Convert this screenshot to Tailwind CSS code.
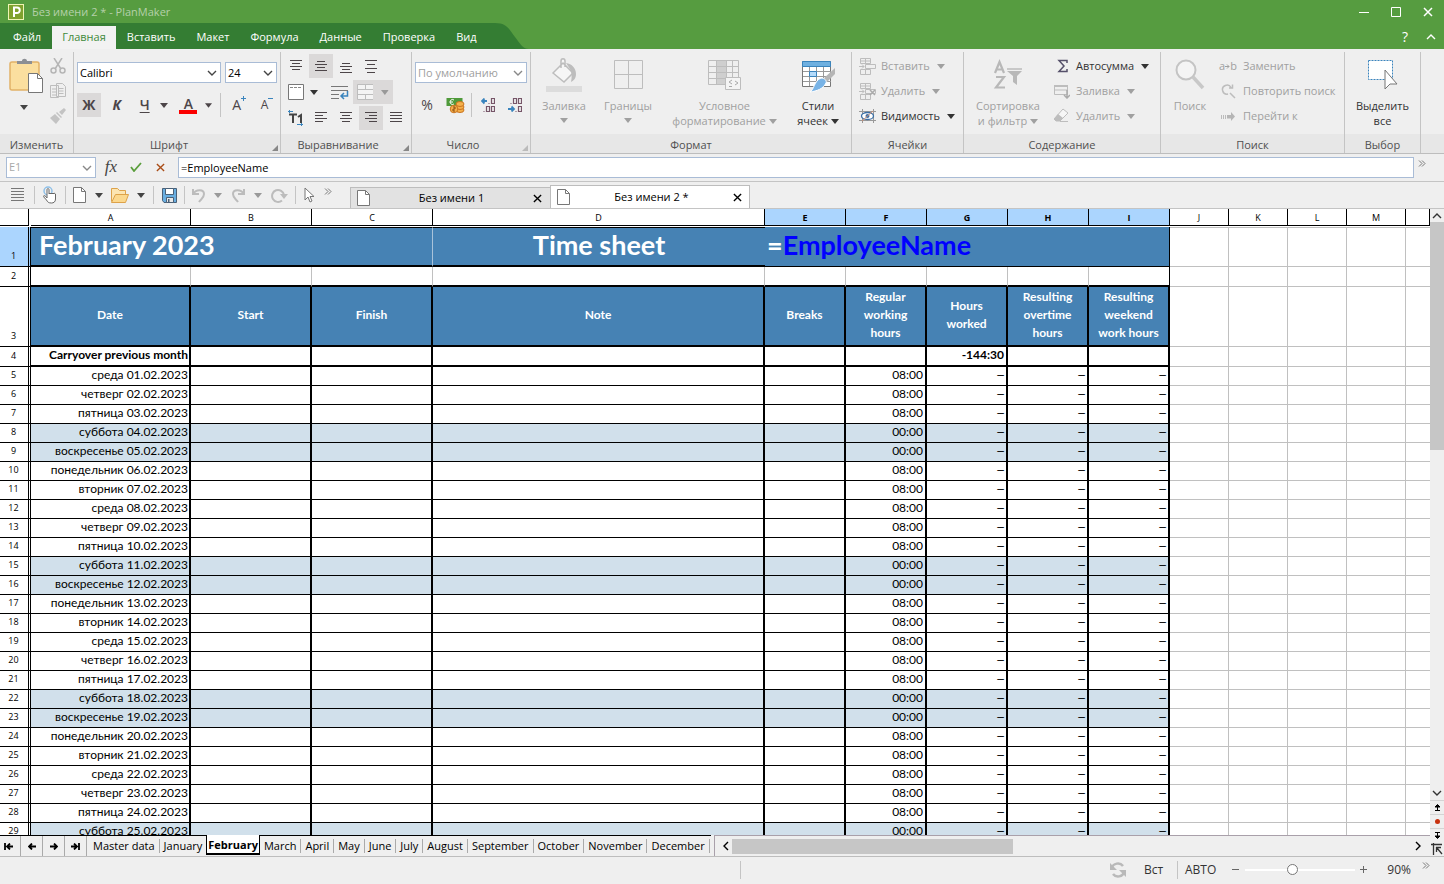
<!DOCTYPE html>
<html lang="ru">

<head>
	<meta charset="UTF-8" />
	<meta name="viewport" content="width=device-width, initial-scale=1.0" />
	<title>Без имени 2 * - PlanMaker</title>
	<script src="https://cdn.jsdelivr.net/npm/@tailwindcss/browser@4"></script>
</head>

<body class="h-screen flex flex-col overflow-hidden bg-[#efefef] font-['Open_Sans','Noto_Sans',sans-serif] text-[11px] leading-4 text-[#333]">

	<!-- shared icons -->
	<svg class="hidden">
		<symbol id="down" viewBox="0 0 8 5"><path d="M0 0h8L4 5z" fill="currentColor" /></symbol>
		<symbol id="chev" viewBox="0 0 10 6"><path d="M1 1l4 4 4-4" fill="none" stroke="currentColor" stroke-width="1.4" /></symbol>
		<symbol id="page" viewBox="0 0 13 16"><path d="M.5.5h8l4 4v11H.5z" fill="#fff" stroke="#777" /><path d="M8.500.5v4h4" fill="none" stroke="#777" /></symbol>
		<symbol id="more" viewBox="0 0 8 7"><path d="M1 .5l3 3-3 3M4 .5l3 3-3 3" fill="none" stroke="#777" /></symbol>
		<symbol id="cross" viewBox="0 0 10 10"><path d="M1 1l8 8M9 1l-8 8" fill="none" stroke="currentColor" stroke-width="1.500" /></symbol>
		<symbol id="corner" viewBox="0 0 6 6"><path d="M6 0v6H0z" fill="currentColor" /></symbol>
		<symbol id="undo" viewBox="0 0 14 15"><path d="M1 1v5h6M1.500 5.500C4 1 12 1 12 6c0 4-3 5-5 8" fill="none" stroke="#bcbcbc" stroke-width="2" /></symbol>
		<symbol id="cells" viewBox="0 0 17 17"><path d="M1.500.5h10v5h-10zM6.500.5v5M1.500 3h10M6.500 6.500h10v4h-10zM1.500 11.500h10v5h-10zM6.500 11.500v5M0 8.500h5M3 6.500l2 2-2 2" fill="none" stroke="#bdbdbd" /></symbol>
	</svg>

	<!-- title bar -->
	<header class="h-[23px] shrink-0 flex items-center bg-[#569c40] text-[#b5d0aa]">
		<svg class="ml-2 mr-2" width="16" height="16"><rect width="16" height="16" fill="#eef4b4" /><rect x="1" y="1" width="14" height="14" fill="#7fa22e" /><path d="M6 13V3.500h3a2.500 2.500 0 010 5.500H6" fill="none" stroke="#fff" stroke-width="2" /></svg>
		<h1>Без имени 2 * - PlanMaker</h1>
		<div class="ml-auto flex text-white">
			<button class="w-8 flex justify-center" aria-label="Свернуть"><svg width="10" height="10"><path d="M0 5.500h10" stroke="currentColor" /></svg></button>
			<button class="w-8 flex justify-center" aria-label="Развернуть"><svg width="10" height="10"><path d="M.5.5h9v9h-9z" fill="none" stroke="currentColor" /></svg></button>
			<button class="w-8 flex justify-center" aria-label="Закрыть"><svg width="10" height="10"><use href="#cross" /></svg></button>
		</div>
	</header>

	<!-- menu tabs -->
	<div class="h-[26px] shrink-0 flex items-end bg-[#569c40] text-white">
		<nav class="h-[26px] flex items-end gap-px bg-[#347d33] pl-[3px]">
			<a href="#" class="h-[23px] leading-[22px] px-[10px]">Файл</a>
			<a href="#" class="h-[23px] leading-[22px] px-[10px] bg-[#f2f2f2] text-[#3f8a3a]">Главная</a>
			<a href="#" class="h-[23px] leading-[22px] px-[10px]">Вставить</a>
			<a href="#" class="h-[23px] leading-[22px] px-[10px]">Макет</a>
			<a href="#" class="h-[23px] leading-[22px] px-[10px]">Формула</a>
			<a href="#" class="h-[23px] leading-[22px] px-[10px]">Данные</a>
			<a href="#" class="h-[23px] leading-[22px] px-[10px]">Проверка</a>
			<a href="#" class="h-[23px] leading-[22px] px-[10px]">Вид</a>
		</nav>
		<svg width="42" height="26"><path d="M0 0h8C20 0 22 6 28 14s8 12 14 12H0z" fill="#347d33" /></svg>
		<div class="ml-auto flex items-center h-6">
			<button class="w-[26px] text-sm" aria-label="Справка">?</button>
			<button class="w-[26px] flex justify-center" aria-label="Свернуть ленту"><svg class="rotate-180" width="10" height="6"><use href="#chev" /></svg></button>
		</div>
	</div>

	<!-- ribbon -->
	<div class="h-[105px] shrink-0 flex pt-[3px] border-b border-[#bdbdbd] bg-[linear-gradient(#efefef_85px,#e7e7e7_85px)]">
		<section class="w-[74px] flex flex-col border-r border-[#c4c4c4]">
			<div class="flex-1 flex">
				<button class="w-12 flex flex-col items-center pt-[6px] gap-3 text-[#444]" aria-label="Вставить">
					<svg class="ml-1" width="34" height="35">
						<rect x="1" y="4" width="29" height="28" rx="2" fill="#fbdf9f" stroke="#e2b268" stroke-width="1.500" />
						<path d="M8 6V3h5c0-3 5-3 5 0h5v3z" fill="#8c8f94" />
						<path d="M19.500 15.500h9l5 5v14h-14z" fill="#fff" stroke="#777" /><path d="M28.500 15.500v5h5" fill="none" stroke="#777" />
					</svg>
					<svg width="8" height="5"><use href="#down" /></svg>
				</button>
				<div class="flex flex-col gap-[9px] pt-[6px] w-5 items-center">
					<button aria-label="Вырезать"><svg width="16" height="16"><g fill="none" stroke="#b5b5b5" stroke-width="1.500"><path d="M4 0l7 11M12 0L5 11" /><circle cx="3.500" cy="12.500" r="2.500" /><circle cx="12.500" cy="12.500" r="2.500" /></g></svg></button>
					<button aria-label="Копировать"><svg width="16" height="16"><g fill="#efefef" stroke="#bdbdbd"><path d="M.5 2.500h8v12h-8zM6.500.5h6l3 3v10h-9z" /><path d="M2 6h4M2 9h4M2 12h4M8.500 5.500h5M8.500 8h5M8.500 10.500h5" /></g></svg></button>
					<button aria-label="Формат по образцу"><svg width="16" height="16"><path d="M14 0l2 2-4 5-3-3zM7 4l5 5-1 1-5-5zM5 6l5 5-4 5L0 10z" fill="#c3c3c3" /></svg></button>
				</div>
			</div>
			<h2 class="h-5 leading-[23px] text-center text-[#505050]">Изменить</h2>
		</section>

		<section class="w-[207px] flex flex-col border-r border-[#c4c4c4]">
			<div class="flex-1 px-[3px] pt-[10px] text-black">
				<div class="flex gap-1">
					<label class="relative w-36">
						<select class="w-full h-[21px] appearance-none border border-[#a9bcd6] bg-white px-[2px]" aria-label="Шрифт"><option>Calibri</option></select>
						<svg class="absolute right-1 top-2 text-[#444]" width="10" height="6"><use href="#chev" /></svg>
					</label>
					<label class="relative w-[52px]">
						<select class="w-full h-[21px] appearance-none border border-[#a9bcd6] bg-white px-[2px]" aria-label="Размер"><option>24</option></select>
						<svg class="absolute right-1 top-2 text-[#444]" width="10" height="6"><use href="#chev" /></svg>
					</label>
				</div>
				<div class="flex items-center mt-[10px] text-sm text-[#4c4548]">
					<button class="w-6 h-6 bg-[#dbd9d9] font-bold">Ж</button>
					<button class="w-8 h-6 font-bold italic">К</button>
					<button class="w-6 h-6 font-semibold underline underline-offset-2">Ч</button>
					<button class="w-[15px] h-6 flex items-center justify-center" aria-label="Вид подчёркивания"><svg width="8" height="5"><use href="#down" /></svg></button>
					<button class="w-[34px] h-6 flex flex-col items-center font-semibold leading-[18px]"><span class="pt-[2px] h-[17px]">A</span><span class="h-1 w-[18px] bg-[#fb0000]"></span></button>
					<button class="w-[7px] h-6 flex items-center justify-center" aria-label="Цвет шрифта"><svg width="8" height="5"><use href="#down" /></svg></button>
					<span class="ml-2 w-px h-6 bg-[#c4c4c4]"></span>
					<button class="w-9 h-6 flex items-center justify-center">A<svg class="self-start mt-[3px]" width="5" height="5"><path d="M2.500 0v5M0 2.500h5" stroke="#3a84bd" /></svg></button>
					<button class="w-5 h-6 flex items-center justify-center text-xs">A<svg class="self-start mt-[3px]" width="5" height="5"><path d="M0 2.500h5" stroke="#3a84bd" /></svg></button>
				</div>
			</div>
			<h2 class="relative h-5 leading-[23px] text-center text-[#505050] pr-4">Шрифт<svg class="absolute right-[2px] bottom-[2px] text-[#888]" width="6" height="6"><use href="#corner" /></svg></h2>
		</section>

		<section class="w-[131px] flex flex-col border-r border-[#c4c4c4]">
			<div class="flex-1 px-[3px] pt-[2px] flex flex-col gap-[2px] text-[#4c4548]">
				<div class="flex gap-px">
					<button class="w-6 h-6 flex justify-center pt-1" aria-label="По верхнему краю"><svg width="12" height="16"><path d="M0 2.500h12M2 5.500h8M0 8.500h12M2 11.500h8" stroke="currentColor" /></svg></button>
					<button class="w-6 h-6 flex justify-center pt-1 bg-[#dbd9d9]" aria-label="По середине"><svg width="12" height="16"><path d="M2 3.500h8M0 6.500h12M2 9.500h8M0 12.500h12" stroke="currentColor" /></svg></button>
					<button class="w-6 h-6 flex justify-center pt-1" aria-label="По нижнему краю"><svg width="12" height="16"><path d="M2 5.500h8M0 8.500h12M2 11.500h8M0 14.500h12" stroke="currentColor" /></svg></button>
					<button class="w-6 h-6 flex justify-center pt-1" aria-label="По высоте"><svg width="12" height="16"><path d="M0 2.500h12M2 6.500h8M0 10.500h12M2 14.500h8" stroke="currentColor" /></svg></button>
				</div>
				<div class="flex items-center">
					<button class="w-6 h-6 flex justify-center items-center" aria-label="Поворот"><svg width="16" height="16"><path d="M.5.5h15v15H.5z" fill="#fff" stroke="#777" /><path d="M2 3.500h12" stroke="#888" stroke-dasharray="3 1" /></svg></button>
					<button class="w-3 h-6 flex justify-center items-center text-[#333]" aria-label="Ещё"><svg width="8" height="5"><use href="#down" /></svg></button>
					<button class="w-[33px] h-6 flex justify-end pr-1 items-center" aria-label="Перенос текста"><svg width="18" height="15"><path d="M0 1.500h17M0 5.500h17M0 9.500h8M0 13.500h8" stroke="#777" /><path d="M16.500 6v5h-6M13 8l-3 3 3 3" fill="none" stroke="#3a84bd" stroke-width="1.500" /></svg></button>
					<button class="w-10 h-6 flex items-center gap-2 px-1 bg-[#dbd9d9] text-[#999]" aria-label="Объединить ячейки"><svg width="17" height="16"><path d="M.5.5h16v15H.5zM.5 5.500h16M.5 10.500h16M8.500.5v5M8.500 10.500v5" fill="#f4f4f4" stroke="#bdbdbd" /></svg><svg width="8" height="5"><use href="#down" /></svg></button>
				</div>
				<div class="flex gap-px">
					<button class="w-6 h-6 flex justify-center items-center" aria-label="Направление текста"><svg width="16" height="16"><path d="M1 4.500h8M5 4v9M10 7l3-2v8" fill="none" stroke="#444" stroke-width="2" /><path d="M0 1.500h5M2 0L.5 1.500 2 3M9 14.500h6M13 13l1.500 1.500L13 16" fill="none" stroke="#3a84bd" /></svg></button>
					<button class="w-6 h-6 flex justify-center items-center" aria-label="Влево"><svg width="12" height="12"><path d="M0 .5h12M0 3.500h8M0 6.500h12M0 9.500h8" stroke="currentColor" /></svg></button>
					<button class="w-6 h-6 flex justify-center items-center" aria-label="По центру"><svg width="12" height="12"><path d="M0 .5h12M2 3.500h8M0 6.500h12M2 9.500h8" stroke="currentColor" /></svg></button>
					<button class="w-6 h-6 flex justify-center items-center bg-[#dbd9d9]" aria-label="Вправо"><svg width="12" height="12"><path d="M0 .5h12M4 3.500h8M0 6.500h12M4 9.500h8" stroke="currentColor" /></svg></button>
					<button class="w-6 h-6 flex justify-center items-center" aria-label="По ширине"><svg width="12" height="12"><path d="M0 .5h12M0 3.500h12M0 6.500h12M0 9.500h12" stroke="currentColor" /></svg></button>
				</div>
			</div>
			<h2 class="relative h-5 leading-[23px] text-center text-[#505050] pr-4">Выравнивание<svg class="absolute right-[2px] bottom-[2px] text-[#888]" width="6" height="6"><use href="#corner" /></svg></h2>
		</section>

		<section class="w-[119px] flex flex-col border-r border-[#c4c4c4]">
			<div class="flex-1 px-[3px] pt-[10px]">
				<label class="relative block w-28">
					<select class="w-full h-[21px] appearance-none border border-[#a9bcd6] bg-white px-[2px] text-[#a0a0a0]" aria-label="Числовой формат"><option>По умолчанию</option></select>
					<svg class="absolute right-1 top-2 text-[#888]" width="10" height="6"><use href="#chev" /></svg>
				</label>
				<div class="flex items-center mt-[10px]">
					<button class="w-6 h-6 text-sm text-[#4c4548]">%</button>
					<button class="w-8 h-6 flex justify-center items-center" aria-label="Денежный формат"><svg width="19" height="17"><rect x=".5" y="1" width="16" height="8" fill="#4f9a3a" /><path d="M8 3a2.500 2.500 0 100 4M4 5h3" fill="none" stroke="#fff" /><g fill="#f5b04a" stroke="#c9731f"><ellipse cx="14" cy="13" rx="4" ry="2.500" /><ellipse cx="14" cy="10" rx="4" ry="2.500" /><ellipse cx="14" cy="7" rx="4" ry="2.500" /><circle cx="8" cy="12" r="3.800" /></g><path d="M7 10h2v2H7v2h2" fill="none" stroke="#8a4a10" /></svg></button>
					<span class="w-px h-6 bg-[#c4c4c4]"></span>
					<button class="w-[31px] h-6 flex justify-center items-center" aria-label="Больше знаков"><svg width="14" height="14"><path d="M1 3h5M3.500.5L1 3l2.500 2.500" fill="none" stroke="#3a84bd" stroke-width="1.800" /><path d="M10.500.5h3v5h-3zM5.500 8.500h3v5h-3zM10.500 8.500h3v5h-3zM7.500 5.500h1M2.500 13.500h1" fill="none" stroke="#765568" stroke-width="1.200" /></svg></button>
					<button class="w-[23px] h-6 flex justify-center items-center" aria-label="Меньше знаков"><svg width="14" height="14"><path d="M0 11h6M3.500 8.500L6 11l-2.500 2.500" fill="none" stroke="#3a84bd" stroke-width="1.800" /><path d="M5.500.5h3v5h-3zM10.500.5h3v5h-3zM10.500 8.500h3v5h-3zM2.500 5.500h1M7.500 13.500h1" fill="none" stroke="#765568" stroke-width="1.200" /></svg></button>
				</div>
			</div>
			<h2 class="relative h-5 leading-[23px] text-center text-[#505050] pr-4">Число<svg class="absolute right-[2px] bottom-[2px] text-[#bbb]" width="6" height="6"><use href="#corner" /></svg></h2>
		</section>

		<section class="w-[321px] flex flex-col border-r border-[#c4c4c4]">
			<div class="flex-1 flex pt-[6px] leading-[15px] text-[#a0a0a0]">
				<button class="w-[66px] flex flex-col items-center">
					<svg class="mb-[5px]" width="36" height="35"><path d="M7 15L17 5l10 10-9 9zM15 10V3c0-3 4-3 4 0v6" fill="#f6f6f6" stroke="#bdbdbd" stroke-width="1.500" /><path d="M20 5c6 1 10 5 10 11 0 5-3 7-5 8 1-5 1-9-1-13z" fill="#bdbdbd" /><path d="M0 28h36v6H0z" fill="#dcdcdc" /></svg>
					Заливка<svg class="mt-[5px]" width="8" height="5"><use href="#down" /></svg>
				</button>
				<button class="w-[62px] flex flex-col items-center">
					<svg class="mb-[5px]" width="29" height="35"><path d="M.5 2.500h28v28H.5zM14.500 2.500v28M.5 16.500h28" fill="none" stroke="#bdbdbd" /></svg>
					Границы<svg class="mt-[5px]" width="8" height="5"><use href="#down" /></svg>
				</button>
				<button class="w-[131px] flex flex-col items-center">
					<svg class="mb-[5px]" width="33" height="35"><path d="M8 2h10v25H8z" fill="#cfcfcf" /><path d="M.5 2.500h30v24H.5zM.5 8.500h30M.5 14.500h30M.5 20.500h30M8.500 2v25M18.500 2v25M24.500 2v25" fill="none" stroke="#bdbdbd" /><path d="M17.500 19.500h15v12h-15z" fill="#f4f4f4" stroke="#bdbdbd" /><path d="M24 22l-3 2 3 2M21 28.500h3M27 23l3 2-3 2" fill="none" stroke="#a9a9a9" /></svg>
					<span>Условное</span><span>форматирование <svg class="inline mb-[2px]" width="8" height="5"><use href="#down" /></svg></span>
				</button>
				<button class="w-14 flex flex-col items-center text-[#333]">
					<svg class="mb-[5px]" width="34" height="35"><path d="M1.500 3.500h28v25h-28z" fill="#fff" stroke="#777" /><path d="M2 13.500h28M2 18.500h28M2 23.500h28M8.500 8v20M15.500 8v20M22.500 8v20" stroke="#999" /><path d="M1.500 3.500h28v5h-28z" fill="#6fb0e0" stroke="#3a84bd" /><path d="M8.500 13.500h7v5h-7z" fill="#b5dbfa" stroke="#3a84bd" /><path d="M34 10v6l-8 8-4-3z" fill="#b5b5b5" /><path d="M9 34c4-2 4-11 11-14 4 0 6 3 5 5-3 6-9 8-16 9z" fill="#78b3e6" stroke="#fff" /></svg>
					<span>Стили</span><span>ячеек <svg class="inline mb-[2px]" width="8" height="5"><use href="#down" /></svg></span>
				</button>
			</div>
			<h2 class="h-5 leading-[23px] text-center text-[#505050]">Формат</h2>
		</section>

		<section class="w-28 flex flex-col border-r border-[#c4c4c4]">
			<div class="flex-1 flex flex-col px-[7px] pt-[2px] gap-px text-[#a0a0a0]">
				<button class="h-6 flex items-center gap-[5px]"><svg width="17" height="17"><use href="#cells" /></svg>Вставить<svg class="ml-[2px]" width="8" height="5"><use href="#down" /></svg></button>
				<button class="h-6 flex items-center gap-[5px]"><svg width="17" height="17"><use href="#cells" /><path d="M11 7l5 5M16 7l-5 5" stroke="#aaa" stroke-width="1.500" /></svg>Удалить<svg class="ml-[2px]" width="8" height="5"><use href="#down" /></svg></button>
				<button class="h-6 flex items-center gap-[5px] text-[#333]"><svg width="17" height="14"><path d="M3.500 0v14M14.500 0v14M0 2.500h17M0 11.500h17" stroke="#999" /><ellipse cx="8.500" cy="7" rx="6" ry="3.500" fill="#fff" stroke="#3a6ea5" stroke-width="1.300" /><circle cx="8.500" cy="7" r="2" fill="#3a6ea5" /><path d="M3 12L14 2" stroke="#cc8f75" /></svg>Видимость<svg class="ml-[2px]" width="8" height="5"><use href="#down" /></svg></button>
			</div>
			<h2 class="h-5 leading-[23px] text-center text-[#505050]">Ячейки</h2>
		</section>

		<section class="w-[197px] flex flex-col border-r border-[#c4c4c4]">
			<div class="flex-1 flex text-[#a0a0a0]">
				<button class="w-[88px] flex flex-col items-center justify-start pt-[6px] leading-[15px]">
					<svg class="mb-[5px]" width="30" height="35"><path d="M2 15L6.500 4 11 15M3.500 11.500h6M3 19h8L3 29.500h9" fill="none" stroke="#b8b8b8" stroke-width="2.200" /><path d="M14 11h15" stroke="#bbb" stroke-width="1.500" /><path d="M14 13h15l-5 5v9l-4-3v-6z" fill="#b8b8b8" /></svg>
					<span>Сортировка</span><span>и фильтр <svg class="inline mb-[2px]" width="8" height="5"><use href="#down" /></svg></span>
				</button>
				<div class="flex flex-col gap-px pt-[2px] pl-px">
					<button class="h-6 flex items-center gap-[5px] text-[#333]"><svg class="mx-px" width="16" height="16"><path d="M13 5V2.500H5L10 8l-5 5.500h8V11" fill="none" stroke="#55506a" stroke-width="1.500" /></svg>Автосумма<svg class="ml-[2px]" width="8" height="5"><use href="#down" /></svg></button>
					<button class="h-6 flex items-center gap-[5px]"><svg class="mx-px" width="16" height="16"><path d="M.5 2.500h13v9H.5zM.5 7h13" fill="none" stroke="#bdbdbd" /><path d="M0 2h14v2H0z" fill="#bdbdbd" /><path d="M13 7v7M10 12l3 3 3-3" fill="none" stroke="#aaa" stroke-width="1.500" /></svg>Заливка<svg class="ml-[2px]" width="8" height="5"><use href="#down" /></svg></button>
					<button class="h-6 flex items-center gap-[5px]"><svg class="mx-px" width="16" height="16"><path d="M9 1l5 4-8 8H2l-2-2z" fill="#f6f6f6" stroke="#bdbdbd" /><path d="M4 6l5 4-3 3H2l-2-2z" fill="#bdbdbd" /><path d="M6 13.500h8" stroke="#bdbdbd" /></svg>Удалить<svg class="ml-[2px]" width="8" height="5"><use href="#down" /></svg></button>
				</div>
			</div>
			<h2 class="h-5 leading-[23px] text-center text-[#505050]">Содержание</h2>
		</section>

		<section class="w-[184px] flex flex-col border-r border-[#c4c4c4]">
			<div class="flex-1 flex text-[#a0a0a0]">
				<button class="w-[58px] flex flex-col items-center justify-start pt-[6px] leading-[15px]">
					<svg class="mb-[5px]" width="30" height="35"><circle cx="11" cy="12" r="9.500" fill="#f4f4f4" stroke="#c4c4c4" stroke-width="2" /><path d="M18 19l10 11" stroke="#c8c8c8" stroke-width="3.500" /></svg>
					Поиск
				</button>
				<div class="flex flex-col gap-px pt-[2px] whitespace-nowrap">
					<button class="h-6 flex items-center gap-[5px]"><span class="w-[19px] flex items-center">a<svg width="5" height="5"><path d="M0 2.500h4M2 .5l2 2-2 2" fill="none" stroke="#a0a0a0" /></svg>b</span>Заменить</button>
					<button class="h-6 flex items-center gap-[5px]"><svg class="mx-[2px]" width="15" height="15"><path d="M10 3.500A4.500 4.500 0 107 10M8 4h3.500V.5M9 9l5 5" fill="none" stroke="#bdbdbd" stroke-width="1.500" /></svg>Повторить поиск</button>
					<button class="h-6 flex items-center gap-[5px]"><svg class="mx-[2px]" width="15" height="9"><path d="M.5 3v4M2.500 3v4M4.500 3v4" stroke="#bbb" /><path d="M6 3h4V0l4 4.500L10 9V6.500H6z" fill="#b5b5b5" /></svg>Перейти к</button>
				</div>
			</div>
			<h2 class="h-5 leading-[23px] text-center text-[#505050]">Поиск</h2>
		</section>

		<section class="w-[76px] flex flex-col border-r border-[#c4c4c4]">
			<button class="flex-1 flex flex-col items-center justify-start pt-[6px] leading-[15px] text-[#333]">
				<svg class="mb-[5px]" width="30" height="35"><path d="M.5 2.500h24v19H.5z" fill="#fff" stroke="#3a84bd" stroke-dasharray="2 1" /><path d="M17 12v19l5-5h7z" fill="#fff" stroke="#777" /></svg>
				<span>Выделить</span><span>все</span>
			</button>
			<h2 class="h-5 leading-[23px] text-center text-[#505050]">Выбор</h2>
		</section>
	</div>

	<!-- formula bar -->
	<div class="h-7 shrink-0 flex items-center pl-[6px] pb-px border-b border-[#c4c4c4]">
		<label class="relative w-[90px]">
			<select class="w-full h-[21px] appearance-none border border-[#a9bcd6] bg-white px-[2px] text-[#a9a9a9]" aria-label="Ячейка"><option>E1</option></select>
			<svg class="absolute right-1 top-2 text-[#888]" width="10" height="6"><use href="#chev" /></svg>
		</label>
		<button class="w-7 pl-[2px] font-['Liberation_Serif',serif] italic text-[17px] leading-5 text-[#444]">fx</button>
		<button class="w-6 flex justify-center" aria-label="Принять"><svg width="12" height="10"><path d="M1 5l3 4 7-8" fill="none" stroke="#5a9e3c" stroke-width="1.800" /></svg></button>
		<button class="w-6 flex justify-center text-[#a94c16]" aria-label="Отмена"><svg width="9" height="9"><use href="#cross" /></svg></button>
		<input class="ml-[6px] flex-1 h-[21px] border border-[#a9bcd6] bg-white px-[2px] text-black" value="=EmployeeName" aria-label="Формула" />
		<svg class="ml-1 mr-[18px] mb-2" width="8" height="7"><use href="#more" /></svg>
	</div>

	<!-- quick access bar and document tabs -->
	<div class="h-[27px] shrink-0 flex items-center border-b border-[#c4c4c4] text-[#444]">
		<button class="w-[34px] flex justify-center" aria-label="Меню"><svg width="13" height="14"><path d="M0 .5h13M0 3.500h13M0 6.500h13M0 9.500h13M0 12.500h13" stroke="#777" /></svg></button>
		<span class="w-px h-[18px] bg-[#c4c4c4]"></span>
		<button class="w-[30px] flex justify-center" aria-label="Сенсорный режим"><svg width="14" height="18"><circle cx="5" cy="5" r="4" fill="none" stroke="#8fc0e8" stroke-width="1.500" /><path d="M4 12V4c0-2 2-2 2 0v4l1-1 1 1 1-1 1 1 1-1 1.500 1v5c0 3-2 4-4 4-3 0-4-1-5-3L.8 11C0 9 2 9 4 12z" fill="#fff" stroke="#666" /></svg></button>
		<span class="w-px h-[18px] bg-[#c4c4c4]"></span>
		<button class="w-[27px] flex justify-center" aria-label="Создать"><svg width="13" height="16"><use href="#page" /></svg></button>
		<button class="w-3 flex justify-center" aria-label="Шаблоны"><svg width="8" height="5"><use href="#down" /></svg></button>
		<button class="w-[30px] flex justify-center" aria-label="Открыть"><svg width="18" height="15"><path d="M.5 13.500v-13h6l2 2h6v4" fill="#fce5b2" stroke="#dda24a" /><path d="M.5 14.500l4-8h13l-3 8z" fill="#fbd88e" stroke="#dda24a" /></svg></button>
		<button class="w-[11px] flex justify-center" aria-label="Недавние"><svg width="8" height="5"><use href="#down" /></svg></button>
		<span class="ml-[7px] w-px h-[18px] bg-[#c4c4c4]"></span>
		<button class="w-[30px] flex justify-center" aria-label="Сохранить"><svg width="15" height="15"><path d="M.5.5h14v14H2l-1.500-2z" fill="#69aee0" stroke="#4a6178" /><path d="M3.500.5h8v6h-8z" fill="#fff" stroke="#4a6178" /><path d="M4.500 9.500h7v5h-7z" fill="#e8e8e8" stroke="#4a6178" /><path d="M6 11h1.500v3H6z" fill="#4a6178" /></svg></button>
		<span class="w-px h-[18px] bg-[#c4c4c4]"></span>
		<button class="w-[27px] flex justify-center" aria-label="Отменить"><svg width="14" height="15"><use href="#undo" /></svg></button>
		<button class="w-[11px] flex justify-center text-[#999]" aria-label="История"><svg width="8" height="5"><use href="#down" /></svg></button>
		<button class="w-[29px] flex justify-center" aria-label="Вернуть"><svg class="-scale-x-100" width="14" height="15"><use href="#undo" /></svg></button>
		<button class="w-[11px] flex justify-center text-[#999]" aria-label="История возврата"><svg width="8" height="5"><use href="#down" /></svg></button>
		<button class="w-8 flex justify-center" aria-label="Повторить"><svg width="17" height="15"><path d="M11 12.500A6 6 0 1113 7" fill="none" stroke="#bcbcbc" stroke-width="2" /><path d="M9 6h8l-4 5z" fill="#bcbcbc" /></svg></button>
		<span class="w-px h-[18px] bg-[#c4c4c4]"></span>
		<button class="w-[27px] flex justify-center" aria-label="Выбор объектов"><svg width="11" height="16"><path d="M1 1v12l3-3 2 5 2-1-2-4.500h4z" fill="#fff" stroke="#777" /></svg></button>
		<svg class="ml-px mb-2" width="8" height="7"><use href="#more" /></svg>
		<div class="ml-[18px] flex self-end items-end text-black">
			<div class="w-[200px] h-[21px] flex items-center px-[6px] border-t border-l border-[#bdbdbd] bg-[#e2e2e2]">
				<svg width="13" height="16"><use href="#page" /></svg>
				<a href="#" class="flex-1 text-center">Без имени 1</a>
				<button aria-label="Закрыть"><svg class="mr-[2px]" width="9" height="9"><use href="#cross" /></svg></button>
			</div>
			<div class="w-[200px] h-[23px] flex items-center px-[6px] border-t border-x border-[#bdbdbd] bg-white">
				<svg width="13" height="16"><use href="#page" /></svg>
				<a href="#" class="flex-1 text-center">Без имени 2 *</a>
				<button aria-label="Закрыть"><svg class="mr-px" width="9" height="9"><use href="#cross" /></svg></button>
			</div>
		</div>
	</div>

	<!-- sheet -->
	<div class="flex-1 min-h-0 flex">
		<div class="flex-1 min-w-0 flex flex-col">
			<div class="flex-1 min-h-0 overflow-hidden bg-white">
				<table class="w-full table-fixed border-separate border-spacing-0 text-black font-[Lato,'Noto_Sans',sans-serif] text-xs leading-4">
					<colgroup>
						<col class="w-[31px]" /><col class="w-[160px]" /><col class="w-[121px]" /><col class="w-[121px]" /><col class="w-[332px]" />
						<col class="w-[81px]" /><col class="w-[81px]" /><col class="w-[81px]" /><col class="w-[81px]" /><col class="w-[81px]" />
						<col class="w-[59px]" /><col class="w-[59px]" /><col class="w-[59px]" /><col class="w-[59px]" /><col />
					</colgroup>
					<thead>
						<tr id="letters" class="h-[18px] font-['Open_Sans',sans-serif] text-[9px] leading-[17px] align-top"></tr>
					</thead>
					<tbody id="rows"></tbody>
				</table>
			</div>

			<!-- sheet tabs -->
			<div class="h-[22px] shrink-0 flex border-b border-[#bdbdbd] bg-[#efefef] text-black">
				<div class="flex border-t border-black">
					<button class="w-[21px] flex items-center justify-center border-r border-[#aaa]" aria-label="Первый лист"><svg class="-ml-1" width="9" height="7"><path d="M1 0v7M3 3.500h6M6 .5l-3 3 3 3" fill="none" stroke="#000" stroke-width="1.800" /></svg></button>
					<button class="w-[22px] flex items-center justify-center border-r border-[#aaa]" aria-label="Предыдущий лист"><svg width="8" height="7"><path d="M1 3.500h7M4 .5l-3 3 3 3" fill="none" stroke="#000" stroke-width="1.800" /></svg></button>
					<button class="w-[22px] flex items-center justify-center border-r border-[#aaa]" aria-label="Следующий лист"><svg width="8" height="7"><path d="M0 3.500h7M4 .5l3 3-3 3" fill="none" stroke="#000" stroke-width="1.800" /></svg></button>
					<button class="w-[22px] flex items-center justify-center border-r border-[#aaa]" aria-label="Последний лист"><svg width="9" height="7"><path d="M8 0v7M0 3.500h6M3 .5l3 3-3 3" fill="none" stroke="#000" stroke-width="1.800" /></svg></button>
				</div>
				<nav id="sheets" class="w-[624px] flex items-start whitespace-nowrap leading-5"></nav>
				<div class="ml-[3px] flex-1 flex items-center border-t border-l border-[#a9a0aa]">
					<button class="w-[17px] flex justify-center pl-1" aria-label="Влево"><svg class="rotate-90" width="10" height="6"><use href="#chev" /></svg></button>
					<div class="flex-1"><div class="w-[281px] h-[15px] bg-[#c6c6c6]"></div></div>
					<button class="w-6 flex justify-center" aria-label="Вправо"><svg class="-rotate-90" width="10" height="6"><use href="#chev" /></svg></button>
				</div>
			</div>
		</div>

		<!-- vertical scroll bar -->
		<div class="w-[14px] shrink-0 flex flex-col items-center border-b border-[#bdbdbd] bg-[#efefef] text-[#333]">
			<button class="h-[13px] flex items-center" aria-label="Вверх"><svg class="rotate-180" width="10" height="6"><use href="#chev" /></svg></button>
			<div class="flex-1 w-full"><div class="h-[228px] bg-[#c6c6c6]"></div></div>
			<button class="h-[14px] flex items-center" aria-label="Вниз"><svg width="10" height="6"><use href="#chev" /></svg></button>
			<button class="h-[14px] w-full flex items-center justify-center border-t border-[#d4d4d4]" aria-label="Назад"><svg width="7" height="7"><path d="M1 3L3.500.5 6 3zM1 6.500h5M3.500 3v3" fill="#000" stroke="#000" /></svg></button>
			<button class="h-[14px] w-full flex items-center justify-center border-t border-[#d4d4d4]" aria-label="Объект"><span class="size-[5px] rounded-full bg-[#c8320f]"></span></button>
			<button class="h-[14px] w-full flex items-center justify-center border-t border-[#d4d4d4]" aria-label="Далее"><svg class="rotate-180" width="7" height="7"><path d="M1 3L3.500.5 6 3zM1 6.500h5M3.500 3v3" fill="#000" stroke="#000" /></svg></button>
			<button class="h-[14px] w-full flex items-center justify-center" aria-label="К началу"><svg width="12" height="12"><path d="M0 1.500h11M2.500 0v12M5 4.500h5M5.500 4v5M6 5l5 6" fill="none" stroke="#333" stroke-width="1.300" /></svg></button>
		</div>
	</div>

	<!-- status bar -->
	<footer class="h-[27px] shrink-0 flex items-center pb-[2px] text-xs">
		<span class="ml-[740px] w-px h-[18px] bg-[#c4c4c4]"></span>
		<svg class="ml-auto" width="16" height="16"><g fill="none" stroke="#b9b9b9" stroke-width="2.500"><path d="M2 6c1-5 8-6 11-2M14 10c-1 5-8 6-11 2" /></g><path d="M0 1v7h7zM16 15V8H9z" fill="#b9b9b9" /></svg>
		<span class="w-[51px] pl-1 text-center">Вст</span>
		<span class="w-px h-[18px] bg-[#c4c4c4]"></span>
		<span class="w-[47px] pl-[7px]">АВТО</span>
		<button class="w-5 flex justify-center" aria-label="Уменьшить"><svg width="7" height="7"><path d="M0 3.500h7" stroke="#666" /></svg></button>
		<input type="range" min="0" max="100" value="42" aria-label="Масштаб" class="w-[110px] h-3 appearance-none bg-[linear-gradient(transparent_5px,#fff_5px,#fff_7px,transparent_7px)] [&::-webkit-slider-thumb]:appearance-none [&::-webkit-slider-thumb]:size-[11px] [&::-webkit-slider-thumb]:rounded-full [&::-webkit-slider-thumb]:border [&::-webkit-slider-thumb]:border-[#777] [&::-webkit-slider-thumb]:bg-white" />
		<button class="w-[18px] flex justify-center" aria-label="Увеличить"><svg width="8" height="7"><path d="M0 3.500h7M3.500 0v7" stroke="#666" /></svg></button>
		<span class="w-[38px] text-right">90%</span>
		<svg class="ml-[11px] mr-[14px] mb-2" width="8" height="7"><use href="#more" /></svg>
	</footer>

	<script>
		const letters = ['', 'A', 'B', 'C', 'D', 'E', 'F', 'G', 'H', 'I', 'J', 'K', 'L', 'M', ''];
		document.getElementById('letters').innerHTML = letters.map((l, i) => {
			const on = i >= 5 && i <= 9 ? 'bg-[#abd5fe] font-bold' : '';
			const edge = i === 0 ? 'w-[29px]' : '';
			return `<th class="p-0 font-normal"><div class="h-[17px] border-b border-r border-black ${edge} ${on}">${l}</div></th>`;
		}).join('');

		// row numbers and the empty cells right of the table
		const num = (n, cls) => `<th class="border-r-[3px] border-black [border-right-style:double] border-b font-['Open_Sans',sans-serif] font-normal text-[9px] leading-3 align-bottom pb-1 pr-px ${cls || ''}">${n}</th>`;
		const grid = '<td class="border-r border-b border-[#c0c0c0]"></td>'.repeat(4) + '<td class="border-b border-[#c0c0c0]"></td>';
		const gridTop = '<td class="border-r border-y border-[#c0c0c0]"></td>'.repeat(4) + '<td class="border-y border-[#c0c0c0]"></td>';

		let html = `<tr class="h-[40px] text-white font-bold text-[27px] leading-8">
			${num(1, 'bg-[#abd5fe] text-black')}
			<td colspan="3" class="border-t border-b-2 border-black border-r border-r-[#a9c3da] bg-[#4682b4] pl-2 pb-1">February 2023</td>
			<td class="border-t border-b-2 border-black bg-[#4682b4] text-center pb-1">Time sheet</td>
			<td colspan="5" class="border-b border-r border-black bg-[#4682b4] pl-[2px] pb-1">=<span class="text-[#0000ff]">EmployeeName</span></td>
			${gridTop}</tr>`;

		html += `<tr class="h-[20px]">${num(2)}` +
			'<td class="border-r border-r-[#c0c0c0] border-b-2 border-black"></td>'.repeat(8) +
			'<td class="border-r border-b-2 border-black"></td>' + grid + '</tr>';

		const titles = ['Date', 'Start', 'Finish', 'Note', 'Breaks', 'Regular<br>working<br>hours', 'Hours<br>worked', 'Resulting<br>overtime<br>hours', 'Resulting<br>weekend<br>work hours'];
		html += `<tr class="h-[60px] text-white font-bold leading-[18px]">${num(3, 'text-black')}` +
			titles.map(t => `<td class="border-r-2 border-b-2 border-black bg-[#4682b4] text-center pb-[2px]">${t}</td>`).join('') + grid + '</tr>';

		const carry = ['Carryover previous month', '', '', '', '', '', '-144:30', '', ''];
		html += `<tr class="h-[20px] font-bold">${num(4)}` +
			carry.map((t, i) => `<td class="border-r-2 border-b-2 border-black text-right pb-[2px] whitespace-nowrap ${i ? 'pr-[2px]' : 'pr-px'}">${t}</td>`).join('') + grid + '</tr>';

		const days = ['воскресенье', 'понедельник', 'вторник', 'среда', 'четверг', 'пятница', 'суббота'];
		for (let d = 1; d <= 25; d++) {
			const wd = (d + 2) % 7;
			const off = wd === 0 || wd === 6;
			const bg = off ? 'bg-[#d1e0eb]' : '';
			const cells = [`${days[wd]} ${String(d).padStart(2, '0')}.02.2023`, '', '', '', '', off ? '00:00' : '08:00'];
			html += `<tr class="h-[19px]">${num(d + 4)}` +
				cells.map((t, i) => `<td class="border-r-2 border-b border-black text-right pb-[2px] whitespace-nowrap ${i ? 'pr-[2px]' : 'pr-px'} ${bg}">${t}</td>`).join('') +
				`<td class="border-r-2 border-b border-black text-right pr-[2px] pb-[2px] font-['Liberation_Sans',sans-serif] ${bg}">–</td>`.repeat(3) + grid + '</tr>';
		}
		document.getElementById('rows').innerHTML = html;

		const sheets = ['Master data', 'January', 'February', 'March', 'April', 'May', 'June', 'July', 'August', 'September', 'October', 'November', 'December'];
		document.getElementById('sheets').innerHTML = '<span class="w-[2px] border-t border-black"></span>' + sheets.map(s => s === 'February'
			? `<a href="#" class="h-5 leading-5 px-px border-x border-b-2 border-black bg-white font-bold">${s}</a>`
			: `<span class="h-[21px] flex items-center border-t border-black"><a href="#" class="px-1 ${s === 'January' ? '' : 'border-r border-[#aaa]'} leading-[14px]">${s}</a></span>`).join('') +
			'<span class="flex-1 border-t border-black"></span>';
	</script>

</body>

</html>
